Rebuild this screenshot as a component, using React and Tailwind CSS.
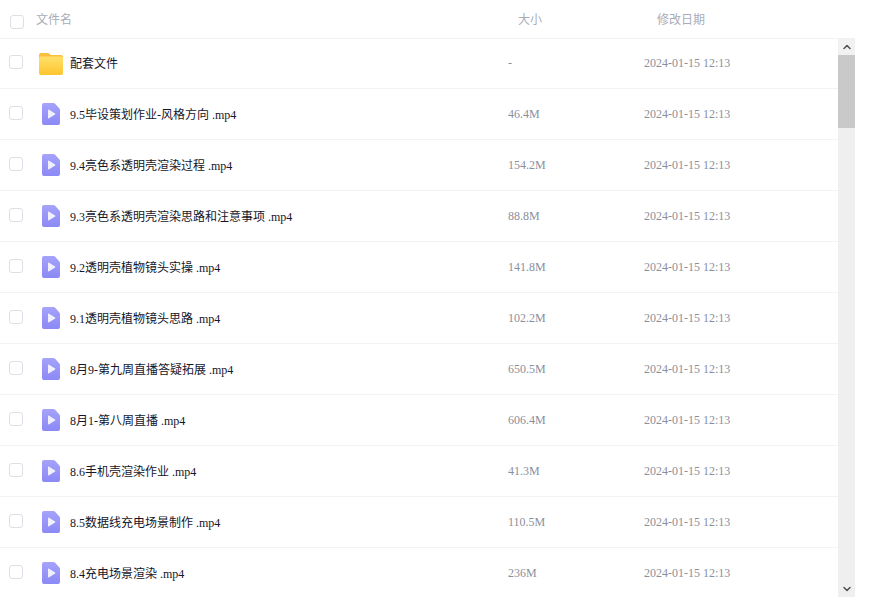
import { ChevronUp, ChevronDown } from "lucide-react";

const files = [
  { name: "配套文件", size: "-", folder: true },
  { name: "9.5毕设策划作业-风格方向 .mp4", size: "46.4M" },
  { name: "9.4亮色系透明壳渲染过程 .mp4", size: "154.2M" },
  { name: "9.3亮色系透明壳渲染思路和注意事项 .mp4", size: "88.8M" },
  { name: "9.2透明壳植物镜头实操 .mp4", size: "141.8M" },
  { name: "9.1透明壳植物镜头思路 .mp4", size: "102.2M" },
  { name: "8月9-第九周直播答疑拓展 .mp4", size: "650.5M" },
  { name: "8月1-第八周直播 .mp4", size: "606.4M" },
  { name: "8.6手机壳渲染作业 .mp4", size: "41.3M" },
  { name: "8.5数据线充电场景制作 .mp4", size: "110.5M" },
  { name: "8.4充电场景渲染 .mp4", size: "236M" },
];

function FolderIcon() {
  return (
    <svg width="24" height="22" viewBox="0 0 24 22" className="shrink-0">
      <defs>
        <linearGradient id="folderFill" x1="0" y1="0" x2="0" y2="1">
          <stop offset="0" stopColor="#ffe06a" />
          <stop offset="1" stopColor="#fdc52f" />
        </linearGradient>
      </defs>
      <path d="M2 0h6.500c1 0 1.600.4 2.200 1l1 1H22a2 2 0 0 1 2 2v3H0V2a2 2 0 0 1 2-2z" fill="#fbbf3a" />
      <path d="M2 3.500h20a2 2 0 0 1 2 2V20a2 2 0 0 1-2 2H2a2 2 0 0 1-2-2V5.500a2 2 0 0 1 2-2z" fill="url(#folderFill)" />
    </svg>
  );
}

function VideoIcon() {
  return (
    <svg width="18" height="22" viewBox="0 0 18 22" className="shrink-0">
      <defs>
        <linearGradient id="videoFill" x1="0" y1="0" x2="0" y2="1">
          <stop offset="0" stopColor="#a5a3fb" />
          <stop offset="1" stopColor="#8b89f5" />
        </linearGradient>
      </defs>
      <path d="M2 0h9.500c.6 0 1 .2 1.400.6l4.500 4.800c.4.400.6.900.6 1.400V20a2 2 0 0 1-2 2H2a2 2 0 0 1-2-2V2a2 2 0 0 1 2-2z" fill="url(#videoFill)" />
      <path d="M6 7v8c0 .4.400.6.700.4l6.400-4c.3-.2.300-.6 0-.8l-6.400-4c-.3-.2-.7 0-.7.400z" fill="#f1f0ff" />
    </svg>
  );
}

function Row({ file }) {
  return (
    <div className="flex h-[51px] items-center border-b border-[#f2f3f5] first:h-[50px]">
      <div className="ml-[9px] mb-[3px] h-[14px] w-[14px] shrink-0 rounded-[3px] border border-[#dcdfe6] bg-white" />
      <div className="ml-4 flex w-[24px] justify-center">
        {file.folder ? <FolderIcon /> : <VideoIcon />}
      </div>
      <div className={file.folder ? "ml-[7px] w-[438px] truncate text-[12px] text-[#14162a]" : "ml-[7px] mt-[2px] w-[438px] truncate text-[12px] text-[#14162a]"}>
        {file.name}
      </div>
      <div className="mb-px w-[136px] text-[12px] text-[#8a8f9e]">{file.size}</div>
      <div className="mb-px text-[12px] text-[#8a8f9e]">2024-01-15 12:13</div>
    </div>
  );
}

export default function App() {
  return (
    <div className="h-[604px] w-[871px] overflow-hidden bg-white font-['Liberation_Serif','Noto_Sans_CJK_SC',serif]">
      <div className="flex h-[38px] w-[855px] items-center text-[12px] text-[#a8adb8]">
        <div className="ml-[10px] mt-[5px] h-[14px] w-[14px] rounded-[3px] border border-[#dcdfe6] bg-white" />
        <div className="ml-3 mt-px w-[482px]">文件名</div>
        <div className="mt-px w-[139px]">大小</div>
        <div className="mt-px">修改日期</div>
      </div>
      <div className="flex h-[559px] w-[855px]">
        <div className="h-full w-[838px] overflow-hidden border-t border-[#f2f3f5]">
          {files.map((file) => (
            <Row key={file.name} file={file} />
          ))}
        </div>
        <div className="flex h-full w-[17px] flex-col bg-[#efefef]">
          <div className="flex h-[17px] items-center justify-center bg-[#f1f1f1]">
            <ChevronUp size={12} strokeWidth={3} className="text-[#505050]" />
          </div>
          <div className="h-[73px] bg-[#c9c9c9]" />
          <div className="flex-1" />
          <div className="flex h-[17px] items-center justify-center">
            <ChevronDown size={12} strokeWidth={3} className="text-[#505050]" />
          </div>
        </div>
      </div>
    </div>
  );
}
